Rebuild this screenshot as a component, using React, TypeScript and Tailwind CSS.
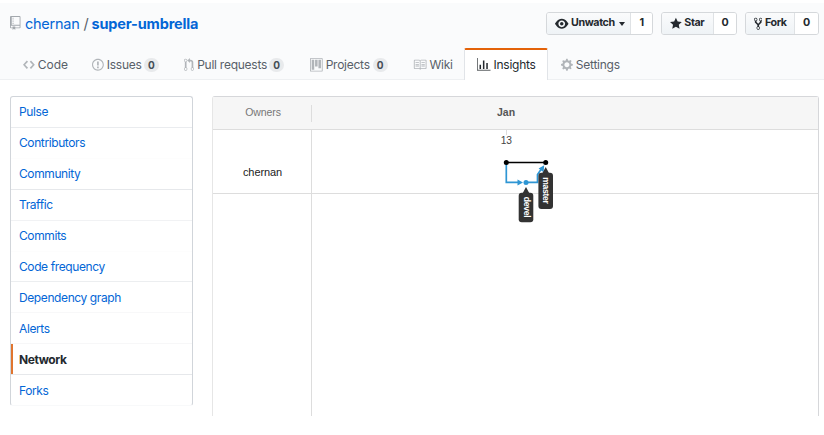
import React from 'react';

const ICONS = {
  repo: { w: 12, d: 'M4 9H3V8h1v1zm0-3H3v1h1V6zm0-2H3v1h1V4zm0-2H3v1h1V2zm8-1v12c0 .55-.45 1-1 1H6v2l-1.5-1.5L3 16v-2H1c-.55 0-1-.45-1-1V1c0-.55.45-1 1-1h10c.55 0 1 .45 1 1zm-1 10H1v2h2v-1h3v1h5v-2zm0-10H2v9h9V1z' },
  eye: { w: 16, d: 'M8.06 2C3 2 0 8 0 8s3 6 8.06 6C13 14 16 8 16 8s-3-6-7.94-6zM8 12c-2.2 0-4-1.78-4-4 0-2.2 1.8-4 4-4 2.22 0 4 1.8 4 4 0 2.22-1.78 4-4 4zm2-4c0 1.11-.89 2-2 2-1.11 0-2-.89-2-2 0-1.11.89-2 2-2 1.11 0 2 .89 2 2z' },
  star: { w: 14, d: 'M14 6l-4.9-.64L7 1 4.9 5.36 0 6l3.6 3.26L2.67 14 7 11.67 11.33 14l-.93-4.74z' },
  fork: { w: 10, d: 'M8 1a1.993 1.993 0 0 0-1 3.72V6L5 8 3 6V4.72A1.993 1.993 0 0 0 2 1a1.993 1.993 0 0 0-1 3.72V6.5l3 3v1.78A1.993 1.993 0 0 0 5 15a1.993 1.993 0 0 0 1-3.72V9.5l3-3V4.72A1.993 1.993 0 0 0 8 1zM2 4.2C1.34 4.2.8 3.65.8 3c0-.65.55-1.2 1.2-1.2.65 0 1.2.55 1.2 1.2 0 .65-.55 1.2-1.2 1.2zm3 10c-.66 0-1.2-.55-1.2-1.2 0-.65.55-1.2 1.2-1.2.65 0 1.2.55 1.2 1.2 0 .65-.55 1.2-1.2 1.2zm3-10c-.66 0-1.2-.55-1.2-1.2 0-.65.55-1.2 1.2-1.2.65 0 1.2.55 1.2 1.2 0 .65-.55 1.2-1.2 1.2z' },
  code: { w: 14, d: 'M9.5 3L8 4.5 11.5 8 8 11.5 9.5 13 14 8 9.5 3zm-5 0L0 8l4.5 5L6 11.5 2.5 8 6 4.5 4.5 3z' },
  issue: { w: 14, d: 'M7 2.3c3.14 0 5.7 2.56 5.7 5.7s-2.56 5.7-5.7 5.7A5.71 5.71 0 0 1 1.3 8c0-3.14 2.56-5.7 5.7-5.7zM7 1C3.14 1 0 4.14 0 8s3.14 7 7 7 7-3.14 7-7-3.14-7-7-7zm1 3H6v5h2V4zm0 6H6v2h2v-2z' },
  pull: { w: 12, d: 'M11 11.28V5c-.03-.78-.34-1.47-.94-2.06C9.46 2.35 8.78 2.03 8 2H7V0L4 3l3 3V4h1c.27.02.48.11.69.31.21.2.3.42.31.69v6.28A1.993 1.993 0 0 0 10 15a1.993 1.993 0 0 0 1-3.72zm-1 2.92c-.66 0-1.2-.55-1.2-1.2 0-.65.55-1.2 1.2-1.2.65 0 1.2.55 1.2 1.2 0 .65-.55 1.2-1.2 1.2zM4 3c0-1.11-.89-2-2-2a1.993 1.993 0 0 0-1 3.72v6.56A1.993 1.993 0 0 0 2 15a1.993 1.993 0 0 0 1-3.72V4.72c.59-.34 1-.98 1-1.72zm-.8 10c0 .66-.55 1.2-1.2 1.2-.65 0-1.2-.55-1.2-1.2 0-.65.55-1.2 1.2-1.2.65 0 1.2.55 1.2 1.2zM2 4.2C1.34 4.2.8 3.65.8 3c0-.65.55-1.2 1.2-1.2.65 0 1.2.55 1.2 1.2 0 .65-.55 1.2-1.2 1.2z' },
  project: { w: 15, d: 'M10 12h3V2h-3v10zm-4-2h3V2H6v8zm-4 4h3V2H2v12zm-1 1h13V1H1v14zM14 0H1a1 1 0 0 0-1 1v14a1 1 0 0 0 1 1h13a1 1 0 0 0 1-1V1a1 1 0 0 0-1-1z' },
  book: { w: 16, d: 'M3 5h4v1H3V5zm0 3h4V7H3v1zm0 2h4V9H3v1zm11-5h-4v1h4V5zm0 2h-4v1h4V7zm0 2h-4v1h4V9zm2-6v9c0 .55-.45 1-1 1H9.5l-1 1-1-1H2c-.55 0-1-.45-1-1V3c0-.55.45-1 1-1h5.5l1 1 1-1H15c.55 0 1 .45 1 1zm-8 .5L7.5 3H2v9h6V3.5zm7-.5H9.5l-.5.5V12h6V3z' },
  graph: { w: 16, d: 'M16 14v1H0V0h1v14h15zM5 13H3V8h2v5zm4 0H7V3h2v10zm4 0h-2V6h2v7z' },
  gear: { w: 14, d: 'M14 8.77v-1.6l-1.94-.64-.45-1.09.88-1.84-1.13-1.13-1.81.91-1.09-.45-.69-1.92h-1.6l-.63 1.94-1.11.45-1.84-.88-1.13 1.13.91 1.81-.45 1.09L0 7.23v1.59l1.94.64.45 1.09-.88 1.84 1.13 1.13 1.81-.91 1.09.45.69 1.92h1.59l.63-1.94 1.11-.45 1.84.88 1.13-1.13-.92-1.81.47-1.09L14 8.75v.02zM7 11c-1.66 0-3-1.34-3-3s1.34-3 3-3 3 1.34 3 3-1.34 3-3 3z' },
};

function Icon({ name, size = 13.5, className = '' }: { name: keyof typeof ICONS; size?: number; className?: string }) {
  const { w, d } = ICONS[name];
  return (
    <svg width={(w * size) / 16} height={size} viewBox={`0 0 ${w} 16`} fill="currentColor" className={`shrink-0 ${className}`}>
      <path fillRule="evenodd" d={d} />
    </svg>
  );
}

function SocialButton({ icon, label, count, width, countWidth, caret }: {
  icon: keyof typeof ICONS; label: string; count: number; width: string; countWidth: string; caret?: boolean;
}) {
  return (
    <div className={`flex h-[23px] overflow-hidden rounded-[3px] border border-[#d5d8db] text-[10.7px] font-bold tracking-[-0.4px] text-[#24292e] ${width}`}>
      <div className="flex flex-1 items-center bg-linear-to-b from-[#fafbfc] to-[#eff3f6] pl-2">
        <Icon name={icon} />
        <span className="ml-[2.5px]">{label}</span>
        {caret && <span className="ml-[4px] border-x-[3px] border-t-[4px] border-x-transparent border-t-[#24292e]" />}
      </div>
      <div className={`flex items-center justify-center border-l border-[#dfe2e5] bg-white ${countWidth}`}>{count}</div>
    </div>
  );
}

const TABS: { icon: keyof typeof ICONS; label: string; count?: number; width: string; text: string; active?: boolean }[] = [
  { icon: 'code', label: 'Code', width: 'w-[69px]', text: 'tracking-normal' },
  { icon: 'issue', label: 'Issues', count: 0, width: 'w-[92px]', text: 'w-[34px]' },
  { icon: 'pull', label: 'Pull requests', count: 0, width: 'w-[126px]', text: 'w-[69px]' },
  { icon: 'project', label: 'Projects', count: 0, width: 'w-[103px]', text: 'w-[44px]' },
  { icon: 'book', label: 'Wiki', width: 'w-[51px]', text: '' },
  { icon: 'graph', label: 'Insights', width: 'w-[84px]', text: '', active: true },
  { icon: 'gear', label: 'Settings', width: 'w-[80px]', text: '' },
];

const MENU = [
  { label: 'Pulse', line: 'h-[31px] border-[#eaecef]' },
  { label: 'Contributors', line: 'h-[31px] border-[#fdfdfd]' },
  { label: 'Community', line: 'h-[31px] border-[#e6e8eb]' },
  { label: 'Traffic', line: 'h-[31px] border-[#f1f2f4]' },
  { label: 'Commits', line: 'h-[31px] border-[#fdfdfd]' },
  { label: 'Code frequency', line: 'h-[30px] pt-px border-[#eceef0]' },
  { label: 'Dependency graph', line: 'h-[31px] pt-[2px] border-[#f8f8f9]' },
  { label: 'Alerts', line: 'h-[31px] pt-[2px] border-[#f7f7f8]' },
  { label: 'Network', line: 'h-[31px] pt-[2px] border-[#e6e8eb]', active: true },
  { label: 'Forks', line: 'h-[31px] pt-[2px] border-transparent' },
];

function BranchLabel({ x, y, h, name }: { x: number; y: number; h: number; name: string }) {
  return (
    <g transform={`translate(${x} ${y})`}>
      <path d="M0 0l3.5 6.5h-7z" fill="#333" />
      <rect x="-7.3" y="5.8" width="14.6" height={h} rx="3" fill="#333" />
      <text transform="rotate(90)" x={5.3 + h / 2} y="2.5" textAnchor="middle" fill="#fff" fontSize="8.6" letterSpacing="-0.3" fontWeight="700" fontFamily="'Liberation Sans', Arial, sans-serif">
        {name}
      </text>
    </g>
  );
}

function NetworkCanvas() {
  return (
    <svg width="506" height="285" viewBox="312 130 506 285" className="block">
      <path d="M506.5 130v5" stroke="#ddd" />
      <text x="506.3" y="144" textAnchor="middle" fontSize="10.2" fill="#444" fontFamily="'Liberation Sans', Arial, sans-serif">13</text>
      <path d="M312 193.5h506" stroke="#dddddd" />
      <g fill="none" stroke="#2f96d4" strokeWidth="1.7">
        <path d="M506.3 163v19.4H518" />
        <path d="M526 182.4h11.5v-8l3.5-5" />
      </g>
      <path d="M517.5 179.4l5.5 3-5.5 3zM544.2 165.3l-.6 7-5-3.7z" fill="#2f96d4" />
      <circle cx="526" cy="182.4" r="2.5" fill="#2f96d4" />
      <path d="M506.3 162.5h39.4" stroke="#000" strokeWidth="1.7" />
      <circle cx="506.3" cy="162.5" r="2.5" />
      <circle cx="545.7" cy="162.5" r="2.5" />
      <BranchLabel x={526} y={187} h={29.5} name="devel" />
      <BranchLabel x={545.7} y={167} h={36.2} name="master" />
    </svg>
  );
}

export default function App() {
  return (
    <div className="h-[435px] w-[824px] overflow-hidden bg-white pt-[3px] font-['Inter',sans-serif]">
      <header className="flex h-[77px] flex-col border-b border-[#eef0f2] bg-[#fafbfc]">
        <div className="flex h-[45px] shrink-0 items-start justify-between pt-[9px] pr-[5px] pl-[10px]">
          <h1 className="flex h-[23px] items-center text-[14.5px] whitespace-nowrap text-[#0366d6]">
            <Icon name="repo" size={14} className="-mt-[1px] text-[#a3a8ad]" />
            <span className="ml-[4.5px] w-[55.5px] tracking-[-0.25px]">chernan</span>
            <span className="w-[11px] text-center text-[#586069]">/</span>
            <strong className="font-bold tracking-[-0.15px]">super-umbrella</strong>
          </h1>
          <div className="flex gap-2">
            <SocialButton icon="eye" label="Unwatch" count={1} width="w-[107px]" countWidth="w-[22px]" caret />
            <SocialButton icon="star" label="Star" count={0} width="w-[76px]" countWidth="w-[23px]" />
            <SocialButton icon="fork" label="Fork" count={0} width="w-[74px]" countWidth="w-[24px]" />
          </div>
        </div>
        <nav className="flex h-[32px] shrink-0 pl-[23px] text-[12px] tracking-[-0.25px] whitespace-nowrap text-[#586069]">
          {TABS.map((t) => (
            <a
              key={t.label}
              className={`flex items-center gap-[3px] ${t.width} ${
                t.active ? 'rounded-t-[2px] border-x border-t-2 border-x-[#e1e4e8] border-t-[#e36209] bg-white pl-3 text-[#24292e]' : 'pt-[2px]'
              } ${t.label === 'Settings' ? 'pl-[13px]' : ''}`}
            >
              {t.active ? (
                <svg width="13.5" height="13.5" viewBox="0 0 16 16" className="shrink-0" fill="currentColor">
                  <path d="M16 14v1H0V0h1v14h15z" opacity="0.75" />
                  <path d="M4.8 13H3V8h1.8zM8.8 13H7V3h1.8zM12.8 13H11V6h1.8z" />
                </svg>
              ) : (
                <Icon name={t.icon} className="text-[#b1b5b9]" />
              )}
              <span className={t.text}>{t.label}</span>
              {t.count !== undefined && (
                <span className="flex h-[14px] w-[15px] items-center justify-center rounded-full bg-[#e8eaec] text-[10px] font-bold tracking-normal text-[#444d56]">{t.count}</span>
              )}
            </a>
          ))}
        </nav>
      </header>

      <main className="flex gap-[19px] pt-4 pl-[10px]">
        <nav className="h-[310px] w-[183px] overflow-hidden rounded-[3px] border border-[#d1d5da] border-b-[#f8f9fa] text-[12px] tracking-[-0.4px]">
          {MENU.map((m) => (
            <a
              key={m.label}
              className={`relative flex items-center border-b pl-2 ${m.line} ${m.active ? 'font-bold text-[#24292e]' : 'text-[#0366d6]'}`}
            >
              {m.active && <span className="absolute top-0 bottom-0 left-0 w-[2px] bg-[#e0752f]" />}
              {m.label}
            </a>
          ))}
        </nav>

        <section className="h-[320px] w-[607px] rounded-t-[3px] border border-b-0 border-[#d6d7da] border-l-[#e6e6e6] font-['Liberation_Sans',Arial,sans-serif]">
          <div className="flex h-[33px] items-center border-b border-[#dddddd] bg-[#f6f6f6] text-[10.5px]">
            <div className="flex h-[17px] w-[99px] items-center justify-center border-r border-[#dddddd] pl-[2px] tracking-[-0.1px] text-[#777]">Owners</div>
            <div className="w-[388px] text-center font-bold text-[#555]">Jan</div>
          </div>
          <div className="flex h-[286px]">
            <div className="w-[99px] border-r border-[#dddddd]">
              <div className="flex h-[64px] items-center justify-center border-b border-[#dddddd] pt-[22px] pl-px text-[11px] tracking-[-0.1px] text-[#222]">chernan</div>
            </div>
            <NetworkCanvas />
          </div>
        </section>
      </main>
    </div>
  );
}
